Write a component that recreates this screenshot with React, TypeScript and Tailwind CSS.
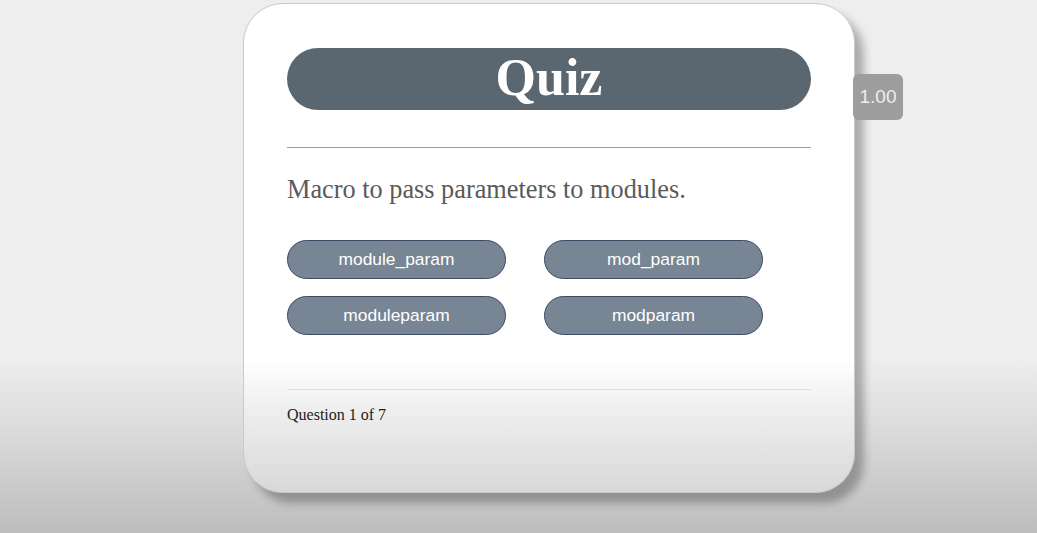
import React from "react";

const answers = ["module_param", "mod_param", "moduleparam", "modparam"];

export default function App() {
  return (
    <main className="min-h-[533px] w-full bg-[linear-gradient(to_bottom,#eeeeee_0%,#eeeeee_67%,#d9d9d9_82%,#bdbdbd_100%)] flex items-start">
      <div className="ml-[243px] mt-[3px] w-[612px] h-[490px] rounded-[40px] border border-[#c9c9c9] bg-[linear-gradient(to_bottom,#ffffff_0%,#ffffff_73%,#f0f0f0_82%,#d8d8d8_100%)] shadow-[9px_10px_8px_rgba(0,0,0,0.28)] px-[43px] pt-[44px] flex flex-col">
        <div className="h-[62px] rounded-full bg-[#5a6670] flex items-center justify-center">
          <h1 className="text-white text-[52px] font-bold leading-none font-['Liberation_Serif',serif] -mt-[2px]">
            Quiz
          </h1>
        </div>

        <div className="mt-[37px] h-px bg-[#9c9c9c]" />

        <p className="mt-[27px] text-[26.3px] leading-[30px] text-[#5a5a5a] font-['Liberation_Serif',serif]">
          Macro to pass parameters to modules.
        </p>

        <div className="mt-[35px] grid grid-cols-[219px_219px] gap-x-[38px] gap-y-[17px]">
          {answers.map((a) => (
            <button
              key={a}
              className="h-[39px] rounded-full bg-[#778594] border border-[#3d4b66] text-white text-[17.4px] font-['Liberation_Sans',sans-serif] flex items-center justify-center"
            >
              {a}
            </button>
          ))}
        </div>

        <div className="mt-[54px] h-px bg-[#dedede]" />

        <p className="mt-[13px] text-[16px] leading-[24px] text-[#222222] font-['Liberation_Serif',serif]">
          Question 1 of 7
        </p>
      </div>

      <div className="mt-[74px] -ml-[2px] w-[50px] h-[46px] rounded-[6px] bg-[#9d9d9d] text-[#eeeeee] text-[19px] font-['Liberation_Sans',sans-serif] flex items-center justify-center">
        1.00
      </div>
    </main>
  );
}
